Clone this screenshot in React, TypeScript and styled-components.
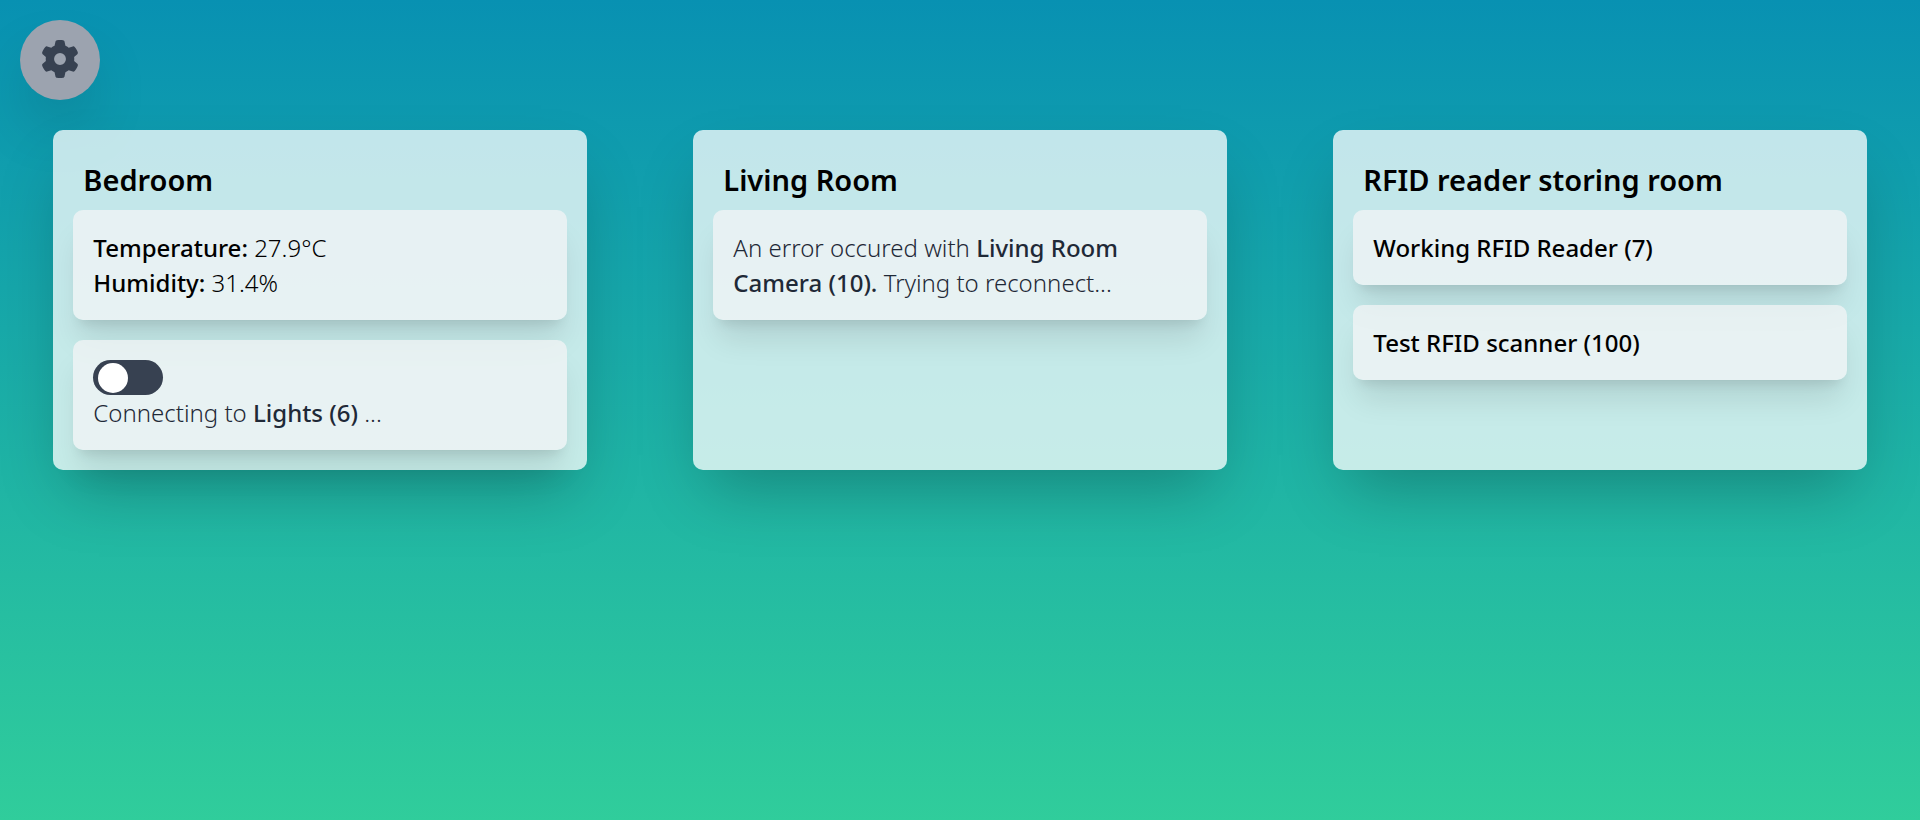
import React from "react";
import styled, { createGlobalStyle } from "styled-components";
import { FaGear } from "react-icons/fa6";

const GlobalStyle = createGlobalStyle`
  *, *::before, *::after { box-sizing: border-box; }
  body {
    margin: 0;
    font-family: "Noto Sans", "Open Sans", sans-serif;
    font-size: 24px;
    font-weight: 300;
    line-height: 35px;
    color: #000;
  }
`;

const Page = styled.div`
  min-height: 100vh;
  padding: 20px 0;
  background: linear-gradient(to bottom, #0891b2, #34d399 110%);
`;

const Header = styled.header`
  display: flex;
  padding: 0 20px;
  margin-bottom: 30px;
`;

const SettingsButton = styled.button`
  display: flex;
  align-items: center;
  justify-content: center;
  width: 80px;
  height: 80px;
  padding: 0 0 2px;
  border: 0;
  border-radius: 50%;
  background: #9ca3af;
  color: #374151;
  font-size: 38px;
  cursor: pointer;
  box-shadow: 0 31px 62px -15px rgba(0, 0, 0, 0.25);
`;

const Rooms = styled.main`
  display: grid;
  grid-template-columns: repeat(3, 1fr);
`;

const Room = styled.section`
  width: calc(100% * 5 / 6);
  margin: 0 auto;
  padding: 20px;
  border-radius: 10px;
  background: rgba(255, 255, 255, 0.75);
  box-shadow: 0 31px 62px -15px rgba(0, 0, 0, 0.25);
`;

const RoomTitle = styled.h2`
  margin: 10px;
  font-size: 29px;
  font-weight: 600;
  line-height: 40px;
`;

const DeviceList = styled.div`
  display: flex;
  flex-direction: column;
  gap: 20px;
`;

const Device = styled.article<{ $pending?: boolean }>`
  padding: 20px;
  border-radius: 10px;
  background: rgba(243, 244, 246, 0.75);
  color: ${(p) => (p.$pending ? "#1f2937" : "#000")};
  box-shadow: 0 25px 31px -6px rgba(0, 0, 0, 0.1), 0 10px 12px -7px rgba(0, 0, 0, 0.1);
`;

const Line = styled.p`
  margin: 0;
`;

const Name = styled.strong`
  font-weight: 500;
`;

const Toggle = styled.input`
  display: flex;
  align-items: center;
  appearance: none;
  width: 70px;
  height: 35px;
  margin: 0;
  padding: 0 5px;
  border-radius: 18px;
  background: #374151;
  cursor: pointer;

  &::before {
    content: "";
    width: 30px;
    height: 30px;
    border-radius: 50%;
    background: #fff;
  }

  &:checked {
    justify-content: flex-end;
  }
`;

export default function App() {
  return (
    <>
      <GlobalStyle />
      <Page>
        <Header>
          <SettingsButton type="button" aria-label="Settings">
            <FaGear />
          </SettingsButton>
        </Header>
        <Rooms>
          <Room>
            <RoomTitle>Bedroom</RoomTitle>
            <DeviceList>
              <Device>
                <Line><Name>Temperature:</Name> 27.9°C</Line>
                <Line><Name>Humidity:</Name> 31.4%</Line>
              </Device>
              <Device $pending>
                <Toggle type="checkbox" role="switch" aria-label="Lights" />
                <Line>Connecting to <Name>Lights (6)</Name> ...</Line>
              </Device>
            </DeviceList>
          </Room>
          <Room>
            <RoomTitle>Living Room</RoomTitle>
            <DeviceList>
              <Device $pending>
                <Line>
                  An error occured with <Name>Living Room Camera (10).</Name> Trying to reconnect...
                </Line>
              </Device>
            </DeviceList>
          </Room>
          <Room>
            <RoomTitle>RFID reader storing room</RoomTitle>
            <DeviceList>
              <Device>
                <Line><Name>Working RFID Reader (7)</Name></Line>
              </Device>
              <Device>
                <Line><Name>Test RFID scanner (100)</Name></Line>
              </Device>
            </DeviceList>
          </Room>
        </Rooms>
      </Page>
    </>
  );
}
